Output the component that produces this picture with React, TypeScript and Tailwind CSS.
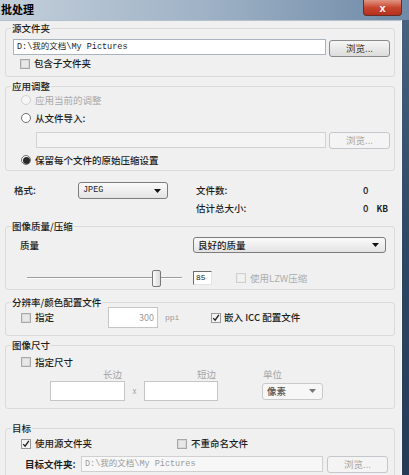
import type { ReactNode } from "react";

const ui = "font-['Noto_Sans_CJK_SC','Noto_Sans',sans-serif]";
const mono = "font-['Liberation_Mono','Noto_Sans_CJK_SC',monospace]";

function Group({ title, className = "", children }: { title: string; className?: string; children: ReactNode }) {
  return (
    <fieldset className={`border border-[#dadada] rounded-[3px] ${className}`}>
      <legend className="ml-[5px] px-[1px] leading-[10px] font-medium">{title}</legend>
      {children}
    </fieldset>
  );
}

function Check({ checked = false, disabled = false }: { checked?: boolean; disabled?: boolean }) {
  return (
    <span
      className={`relative flex shrink-0 items-center justify-center w-[10px] h-[10px] border ${
        disabled ? "border-[#d0d0d0] bg-[#ececec]" : checked ? "border-[#9a9a9a] bg-[#f4f4f4]" : "border-[#a8a8a8] bg-[#d8d8d8]"
      }`}
    >
      {!checked && <span className={`w-[6px] h-[6px] ${disabled ? "bg-[#f2f2f2]" : "bg-[#e8e8e8]"}`} />}
      {checked && (
        <svg viewBox="0 0 10 10" className="w-[10px] h-[10px]">
          <path d="M1.5 5.2 L3.9 7.8 L8.6 1.2" stroke="#1f1f1f" strokeWidth="1.7" fill="none" />
        </svg>
      )}
    </span>
  );
}

function Radio({ checked = false, disabled = false }: { checked?: boolean; disabled?: boolean }) {
  return (
    <span
      className={`flex shrink-0 items-center justify-center w-[10px] h-[10px] rounded-full border ${
        disabled ? "border-[#d2d2d2] bg-[#f6f6f6]" : "border-[#6f6f6f] bg-white"
      }`}
    >
      {checked && <span className="w-[7px] h-[7px] rounded-full bg-[#2a2a2a]" />}
    </span>
  );
}

function Button({ disabled = false, className = "" }: { disabled?: boolean; className?: string }) {
  return (
    <div
      className={`flex items-center justify-center w-[61px] h-[17px] rounded-[3px] border ${
        disabled
          ? "border-[#c4c8cc] bg-[#f4f4f4] text-[#a6a6a6]"
          : "border-[#8a8a8a] bg-gradient-to-b from-[#f6f6f6] to-[#dcdcdc] text-[#333]"
      } ${className}`}
    >
      浏览...
    </div>
  );
}

function Select({ text, className = "", disabled = false }: { text: string; className?: string; disabled?: boolean }) {
  return (
    <div
      className={`flex items-center justify-between pl-[4px] pr-[6px] rounded-[3px] border ${
        disabled
          ? "border-[#c9c9c9] bg-[#f7f7f7] text-[#555]"
          : "border-[#7c7c7c] bg-gradient-to-b from-[#fbfbfb] to-[#e3e3e3]"
      } ${className}`}
    >
      <span className="font-medium">{text}</span>
      <svg viewBox="0 0 7 4" className="w-[7px] h-[4px]">
        <path d="M0 0 H7 L3.5 4 Z" fill={disabled ? "#777" : "#111"} />
      </svg>
    </div>
  );
}

export default function App() {
  return (
    <div className={`w-[409px] h-[475px] overflow-hidden flex flex-col bg-[#f0f0f0] text-[9.5px] text-[#1c1c1c] ${ui}`}>
      {/* title bar */}
      <div className="h-[20px] shrink-0 flex items-start justify-between bg-gradient-to-r from-[#c3cfdb] via-[#9fb2c6] to-[#6f8aa7]">
        <span className="pl-[1px] pt-[2px] text-[11px] leading-[14px] font-bold text-black">批处理</span>
        <div className="mr-[7px] w-[39px] h-[16px] rounded-b-[4px] border border-t-0 border-[#6b2a22] bg-gradient-to-b from-[#e09484] via-[#c8452f] to-[#b3301f] flex items-center justify-center">
          <span className="text-white text-[11px] leading-[12px] font-bold font-['Liberation_Sans',sans-serif]">x</span>
        </div>
      </div>

      <div className="flex flex-1 min-h-0">
        <div className="flex-1 flex flex-col pl-[5px] pr-[6px] pt-[2px] border-t border-[#b3c0cc]">
          {/* 源文件夹 */}
          <Group title="源文件夹" className="pb-[7px]">
            <div className="mt-[6px] flex items-start">
              <div className={`ml-[7px] w-[313px] h-[16px] flex items-center pl-[3px] bg-white border border-[#a9b4c1] text-[8.5px] ${mono}`}>
                D:\我的文档\My Pictures
              </div>
              <Button className="ml-[3px] mt-[1px]" />
            </div>
            <div className="mt-[1px] h-[11px] flex items-center">
              <span className="ml-[14px]"><Check /></span>
              <span className="ml-[4px] font-medium">包含子文件夹</span>
            </div>
          </Group>

          {/* 应用调整 */}
          <Group title="应用调整" className="mt-[4px] pb-[4px]">
            <div className="mt-[3px] h-[12px] flex items-center">
              <span className="ml-[15px]"><Radio disabled /></span>
              <span className="ml-[4px] text-[#a9a9a9]">应用当前的调整</span>
            </div>
            <div className="mt-[6px] h-[12px] flex items-center">
              <span className="ml-[15px]"><Radio /></span>
              <span className="ml-[4px] font-medium">从文件导入:</span>
            </div>
            <div className="mt-[8px] flex items-start">
              <div className="ml-[30px] w-[290px] h-[16px] bg-[#f4f4f4] border border-[#d2d2d2]" />
              <Button disabled className="ml-[3px]" />
            </div>
            <div className="mt-[5px] h-[12px] flex items-center">
              <span className="ml-[15px]"><Radio checked /></span>
              <span className="ml-[4px] font-medium">保留每个文件的原始压缩设置</span>
            </div>
          </Group>

          {/* 格式 */}
          <div className="mt-[11px] h-[17px] flex items-center">
            <span className="ml-[9px] w-[64px] font-medium">格式:</span>
            <Select text="JPEG" className={`w-[90px] h-[17px] text-[8.5px] ${mono}`} />
            <span className="ml-[28px] w-[167px] font-medium">文件数:</span>
            <span className="font-medium">0</span>
          </div>
          <div className="mt-[3px] h-[15px] flex items-center leading-[12px]">
            <span className="ml-[191px] w-[167px] font-medium">估计总大小:</span>
            <span className="font-medium">0</span>
            <span className="ml-[8px] text-[8.5px] font-bold">KB</span>
          </div>

          {/* 图像质量/压缩 */}
          <Group title="图像质量/压缩" className="mt-[7px] pb-[1px]">
            <div className="mt-[6px] h-[16px] flex items-center">
              <span className="ml-[14px] w-[173px] font-medium">质量</span>
              <Select text="良好的质量" className="w-[193px] h-[16px]" />
            </div>
            <div className="mt-[15px] h-[20px] flex items-center">
              <div className="ml-[21px] w-[155px] h-[20px] flex items-center">
                <div className="w-[125px] h-[2px] border-t border-[#9c9c9c] border-b border-b-white" />
                <div className="w-[9px] h-[17px] rounded-[2px] border border-[#777] bg-gradient-to-r from-[#fafafa] to-[#dadada]" />
                <div className="flex-1 h-[2px] border-t border-[#9c9c9c] border-b border-b-white" />
              </div>
              <div className={`ml-[11px] w-[19px] h-[14px] flex items-center pl-[2px] bg-white border-t border-l border-[#6d6d6d] border-r border-b border-r-[#e4e4e4] border-b-[#e4e4e4] text-[8px] ${mono}`}>
                85
              </div>
              <span className="ml-[24px]"><Check disabled /></span>
              <span className="ml-[4px] text-[#adadad]">使用LZW压缩</span>
            </div>
          </Group>

          {/* 分辨率/颜色配置文件 */}
          <Group title="分辨率/颜色配置文件" className="mt-[7px] pb-[7px]">
            <div className="h-[21px] flex items-center">
              <span className="ml-[15px]"><Check /></span>
              <span className="ml-[4px] w-[73px] font-medium">指定</span>
              <div className={`w-[50px] h-[21px] flex items-center justify-end pr-[3px] bg-white border border-[#c6c6c6] text-[#9a9a9a] text-[9px] ${ui}`}>
                300
              </div>
              <span className={`ml-[7px] w-[46px] text-[#9a9a9a] text-[8px] ${mono}`}>ppi</span>
              <Check checked />
              <span className="ml-[3px] font-medium">嵌入 ICC 配置文件</span>
            </div>
          </Group>

          {/* 图像尺寸 */}
          <Group title="图像尺寸" className="mt-[4px] pb-[7px]">
            <div className="mt-[6px] h-[12px] flex items-center">
              <span className="ml-[15px]"><Check /></span>
              <span className="ml-[4px] font-medium">指定尺寸</span>
            </div>
            <div className="mt-[1px] h-[11px] flex items-center text-[#a5a5a5]">
              <span className="ml-[44px] w-[72px] text-right">长边</span>
              <span className="w-[94px] text-right">短边</span>
              <span className="ml-[47px]">单位</span>
            </div>
            <div className="mt-[1px] h-[20px] flex items-center">
              <div className="ml-[44px] w-[75px] h-[20px] bg-white border border-[#c6c6c6]" />
              <span className="w-[19px] text-center text-[#a5a5a5] text-[8px]">x</span>
              <div className="w-[74px] h-[20px] bg-white border border-[#c6c6c6]" />
              <Select text="像素" disabled className="ml-[44px] w-[61px] h-[17px]" />
            </div>
          </Group>

          {/* 目标 */}
          <Group title="目标" className="mt-[14px] pb-[10px]">
            <div className="mt-[5px] h-[11px] flex items-center">
              <span className="ml-[15px]"><Check checked /></span>
              <span className="ml-[4px] w-[142px] font-medium">使用源文件夹</span>
              <Check />
              <span className="ml-[4px] font-medium">不重命名文件</span>
            </div>
            <div className="mt-[7px] flex items-start">
              <span className="ml-[19px] w-[56px] h-[16px] flex items-center font-bold">目标文件夹:</span>
              <div className={`w-[242px] h-[16px] flex items-center pl-[3px] bg-[#f7f7f7] border border-[#d0d0d0] text-[#9a9a9a] text-[8.5px] ${mono}`}>
                D:\我的文档\My Pictures
              </div>
              <Button disabled className="ml-[4px]" />
            </div>
          </Group>
        </div>
        <div className="w-[8px] shrink-0 border-l border-[#f6f7f9] bg-gradient-to-b from-[#46627f] via-[#2d4764] to-[#243b55]" />
      </div>
    </div>
  );
}
